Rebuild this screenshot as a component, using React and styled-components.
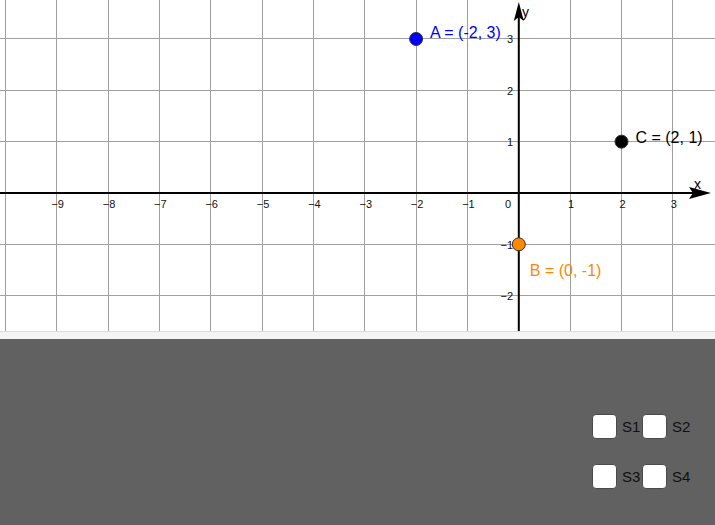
import styled, { createGlobalStyle } from "styled-components";

const GlobalStyle = createGlobalStyle`
    html, body {
        margin: 0;
        padding: 0;
        background: #ffffff;
        font-family: "Liberation Sans", Arial, sans-serif;
    }
`;

const W = 715;
const H = 331;
const O = { x: 518.8, y: 193 };
const U = 51.35;

const px = (v) => O.x + v * U;
const py = (v) => O.y - v * U;

const xs = [-10, -9, -8, -7, -6, -5, -4, -3, -2, -1, 1, 2, 3];
const ys = [-2, -1, 1, 2, 3];

const points = [
    { id: "A", x: -2, y: 3, fill: "#0000ff", text: "A = (-2, 3)", color: "#0000ff", dx: 14, dy: -1 },
    { id: "C", x: 2, y: 1, fill: "#000000", text: "C = (2, 1)", color: "#000000", dx: 14, dy: 1 },
    { id: "B", x: 0, y: -1, fill: "#ff8800", text: "B = (0, -1)", color: "#ff8800", dx: 11, dy: 32 },
];

const boxes = ["S1", "S2", "S3", "S4"];

const label = (n) => (n < 0 ? "\u2212" + Math.abs(n) : String(n));

const App = () => {
    return (
        <Page>
            <GlobalStyle />
            <Graph viewBox={`0 0 ${W} ${H}`} width={W} height={H}>
                {xs.map((v) => (
                    <GridLine key={"gx" + v} x1={px(v)} y1={0} x2={px(v)} y2={H} />
                ))}
                {ys.map((v) => (
                    <GridLine key={"gy" + v} x1={0} y1={py(v)} x2={W} y2={py(v)} />
                ))}
                <Axis x1={0} y1={O.y} x2={694} y2={O.y} />
                <Axis x1={O.x} y1={H} x2={O.x} y2={16} />
                <polygon points={`711,${O.y} 689,${O.y - 6} 693,${O.y} 689,${O.y + 6}`} fill="#000" />
                <polygon points={`${O.x},2 ${O.x - 5},21 ${O.x},17 ${O.x + 5},21`} fill="#000" />
                <AxisName x={694} y={189}>x</AxisName>
                <AxisName x={522} y={17}>y</AxisName>

                {xs.filter((v) => v > -10).map((v) => (
                    <Tick key={"tx" + v} x={px(v) + 1} y={208} anchor="middle">{label(v)}</Tick>
                ))}
                <Tick x={511} y={208} anchor="end">0</Tick>
                {ys.map((v) => (
                    <Tick key={"ty" + v} x={513} y={py(v) + 4.5} anchor="end">{label(v)}</Tick>
                ))}

                {points.map((p) => (
                    <g key={p.id}>
                        <circle cx={px(p.x)} cy={py(p.y)} r={6.5} fill={p.fill} stroke="#333" strokeWidth={1} />
                        <PointName x={px(p.x) + p.dx} y={py(p.y) + p.dy} color={p.color}>{p.text}</PointName>
                    </g>
                ))}
            </Graph>
            <Strip />
            <Panel>
                <CheckGrid>
                    {boxes.map((b) => (
                        <CheckItem key={b}>
                            <Box />
                            <BoxLabel>{b}</BoxLabel>
                        </CheckItem>
                    ))}
                </CheckGrid>
            </Panel>
        </Page>
    );
};

const Page = styled.div`
    width: ${W}px;
    height: 525px;
    display: flex;
    flex-direction: column;
    overflow: hidden;
`;

const Graph = styled.svg`
    display: block;
    flex: none;
    background: #ffffff;
`;

const GridLine = styled.line`
    stroke: #a0a0a0;
    stroke-width: 1;
    shape-rendering: crispEdges;
`;

const Axis = styled.line`
    stroke: #000000;
    stroke-width: 2;
`;

const AxisName = styled.text`
    font-family: "Liberation Sans", Arial, sans-serif;
    font-size: 14px;
    fill: #000;
`;

const Tick = styled.text.attrs((props) => ({ textAnchor: props.anchor }))`
    font-family: "Liberation Sans", Arial, sans-serif;
    font-size: 11px;
    fill: #111;
`;

const PointName = styled.text`
    font-family: "Liberation Sans", Arial, sans-serif;
    font-size: 16px;
    fill: ${(props) => props.color};
`;

const Strip = styled.div`
    flex: none;
    height: 7px;
    background: #f4f4f4;
    border-top: 1px solid #dcdcdc;
`;

const Panel = styled.div`
    flex: 1;
    background: #616161;
    display: flex;
    justify-content: flex-end;
    padding: 75px 23px 0 0;
`;

const CheckGrid = styled.div`
    display: grid;
    grid-template-columns: 50px 50px;
    row-gap: 25px;
    align-content: start;
`;

const CheckItem = styled.div`
    display: flex;
    align-items: center;
    gap: 5px;
    height: 25px;
`;

const Box = styled.span`
    width: 23px;
    height: 23px;
    background: #ffffff;
    border: 1px solid #4a4a4a;
    border-radius: 4px;
    flex: none;
`;

const BoxLabel = styled.span`
    font-size: 15px;
    color: #111111;
`;

export default App;
